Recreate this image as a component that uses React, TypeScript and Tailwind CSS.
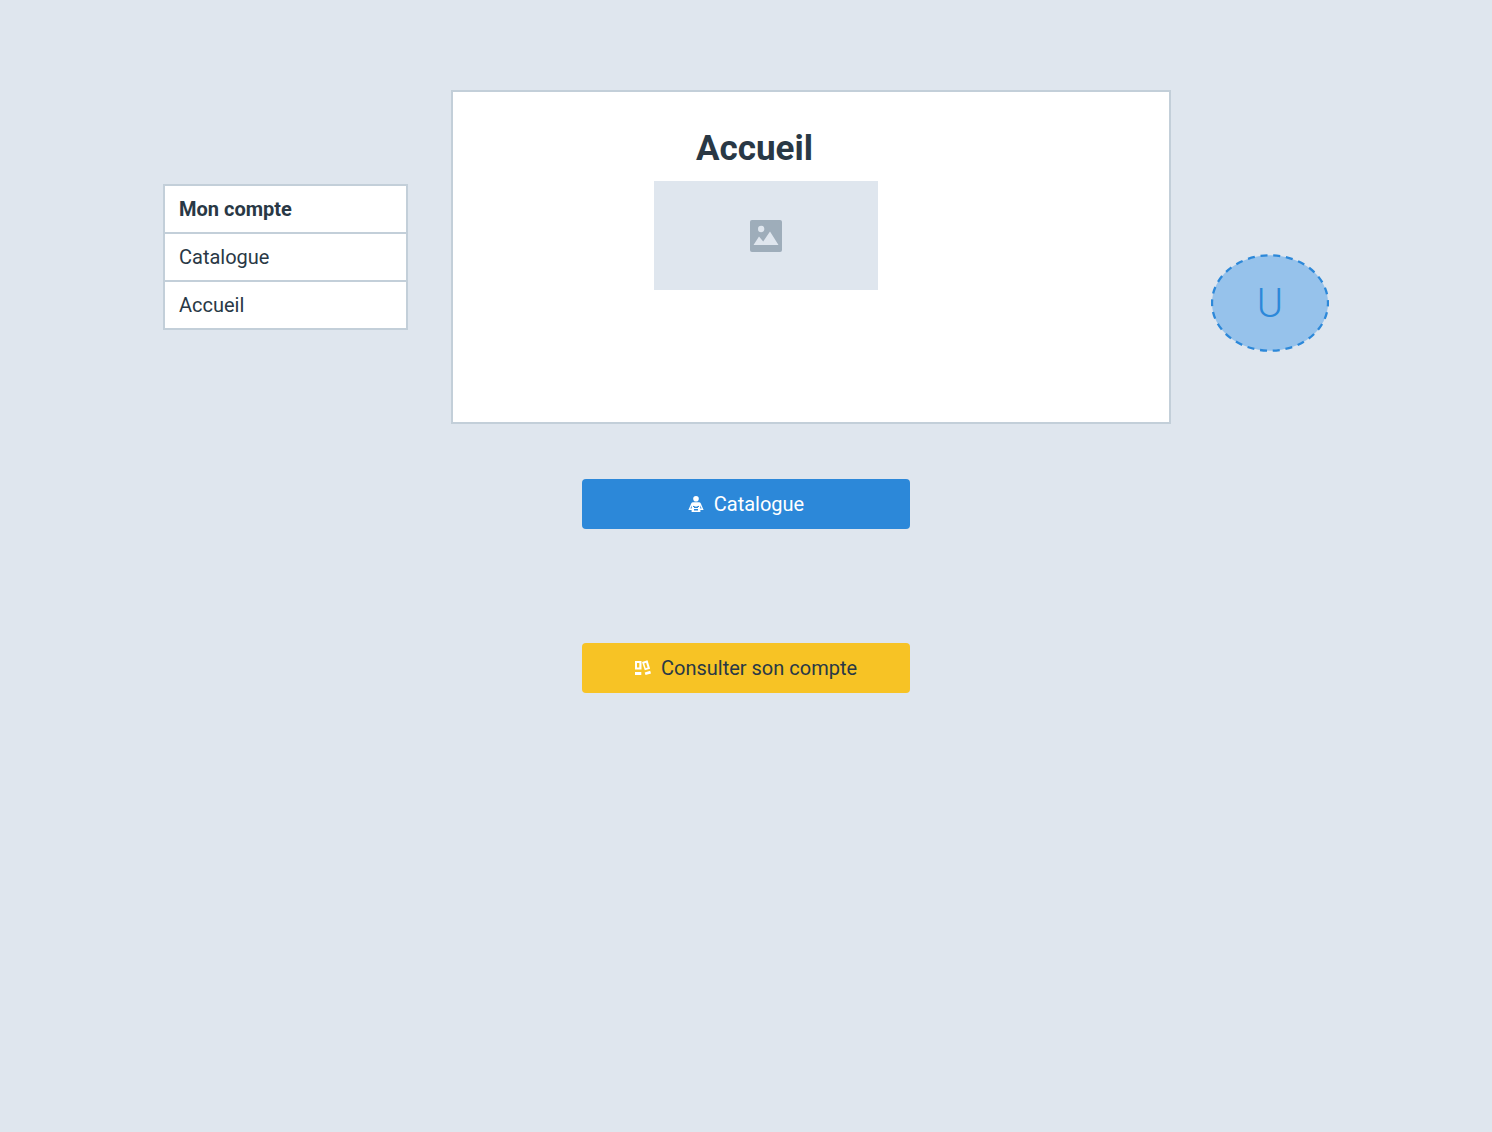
import React from 'react';

const menu = [
  { label: 'Mon compte', weight: 'font-bold' },
  { label: 'Catalogue', weight: 'font-normal' },
  { label: 'Accueil', weight: 'font-normal' },
];

function ImageIcon() {
  return (
    <svg viewBox="0 0 32 32" className="size-8" aria-hidden="true">
      <rect width="32" height="32" rx="2" fill="#9eadba" />
      <circle cx="11.2" cy="9" r="3.2" fill="#dfe6ee" />
      <path d="M3.5 25 9 16.5 13.2 21.5 20 11.5 28.5 25Z" fill="#dfe6ee" />
    </svg>
  );
}

function ReaderIcon() {
  return (
    <svg viewBox="0 0 16 16" className="size-4" fill="white" aria-hidden="true">
      <circle cx="8" cy="2.8" r="2.8" />
      <path
        fillRule="evenodd"
        d="M5 6.3h6q1.2 0 1.8 1.3L15.6 14H12.4v2H3.6v-2H.4L3.2 7.6Q3.8 6.3 5 6.3ZM3.7 9.5 2.4 12.5h1.3Zm8.6 0v3h1.3ZM5 9.7v1.2h1v3.5h4v-3.5h1V9.7L8 10.7Z"
      />
      <path d="M6 12h4v1H6Z" />
    </svg>
  );
}

function BooksIcon() {
  return (
    <svg viewBox="0 0 16 16" className="size-4" fill="white" aria-hidden="true">
      <path fillRule="evenodd" d="M0 1h6.5v8.5H0ZM2 3v4.5h2.3V3Z" />
      <path d="M0 12h6.3v3H0Z" />
      <path fillRule="evenodd" d="m7 2 5.5-1.7 2.6 8.4-5.3 1.6ZM9.2 3.4l1.5 4.8 1.9-.6-1.5-4.8Z" />
      <path d="m9.7 12.5 5.5-1.7.8 2.6-5.5 1.7Z" />
    </svg>
  );
}

export default function App() {
  return (
    <main className="flex min-h-screen flex-col items-center bg-[#dfe6ee] px-4 pt-[90px] font-['Roboto',sans-serif] text-xl text-[#293845]">
      <div className="flex w-full max-w-[1166px] items-center">
        <nav className="w-[245px] shrink-0 divide-y-2 divide-[#c3cfd9] border-2 border-[#c3cfd9] bg-white">
          {menu.map((item) => (
            <a key={item.label} href="#" className={`block px-3.5 py-[9px] leading-7 ${item.weight}`}>
              {item.label}
            </a>
          ))}
        </nav>

        <section className="mr-10 ml-[43px] flex min-h-[334px] min-w-0 flex-1 flex-col items-start border-2 border-[#c3cfd9] bg-white pt-[37px] pl-[201px]">
          <h1 className="pl-[42px] text-[35px] leading-10 font-bold">Accueil</h1>
          <div className="mt-3 flex h-[109px] w-56 items-center justify-center bg-[#dfe6ee]">
            <ImageIcon />
          </div>
        </section>

        <div className="mt-[164px] grid h-[98px] w-[118px] shrink-0 place-items-center self-start">
          <svg viewBox="0 0 118 98" className="col-start-1 row-start-1 h-full w-full" aria-hidden="true">
            <ellipse
              cx="59"
              cy="49"
              rx="58"
              ry="47.7"
              fill="#96c2eb"
              stroke="#2c88d9"
              strokeWidth="2.3"
              strokeDasharray="7 5.8"
              strokeDashoffset="3.5"
            />
          </svg>
          <span className="col-start-1 row-start-1 pt-0.5 text-[40px] leading-none font-light text-[#2c88d9]">U</span>
        </div>
      </div>

      <button className="mt-[55px] flex h-[50px] w-[328px] items-center justify-center gap-2.5 rounded bg-[#2c88d9] text-white">
        <ReaderIcon />
        Catalogue
      </button>
      <button className="mt-[114px] flex h-[50px] w-[328px] items-center justify-center gap-2.5 rounded bg-[#f7c325]">
        <BooksIcon />
        Consulter son compte
      </button>
    </main>
  );
}
